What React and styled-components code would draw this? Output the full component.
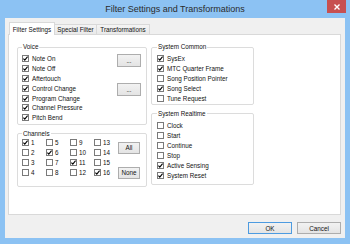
import React from 'react';
import styled, { createGlobalStyle } from 'styled-components';

const GlobalStyle = createGlobalStyle`
  * { box-sizing: border-box; }
  html, body { margin: 0; padding: 0; background: #8cc2f3; }
`;

const Window = styled.div`
  width: 350px;
  height: 244px;
  background: #8cc2f3;
  display: flex;
  flex-direction: column;
  font-family: 'Liberation Sans', Arial, sans-serif;
  color: #111;
`;

const TitleBar = styled.div`
  height: 18px;
  display: grid;
  grid-template-columns: 1fr auto 1fr;
  align-items: start;
`;

const Title = styled.div`
  grid-column: 2;
  font-size: 9px;
  line-height: 18px;
  color: #2b2b2b;
  white-space: nowrap;
`;

const CloseButton = styled.div`
  grid-column: 3;
  justify-self: end;
  width: 19px;
  height: 13px;
  margin-right: 4px;
  background: #c75050;
  display: flex;
  align-items: center;
  justify-content: center;
`;

const Body = styled.div`
  flex: 1;
  margin: 0 5px 6px;
  background: #f0f0f0;
  padding: 4px 4px 0 3px;
  display: flex;
  flex-direction: column;
`;

const TabStrip = styled.div`
  display: flex;
  align-items: flex-end;
  height: 13px;
  padding-left: 1px;
  margin-bottom: -1px;
  position: relative;
  z-index: 1;
`;

const Tab = styled.div`
  width: ${p => p.$w}px;
  height: ${p => (p.$active ? 13 : 11)}px;
  border: 1px solid #d9d9d9;
  border-left: ${p => (p.$first ? '1px solid #d9d9d9' : 'none')};
  border-bottom: ${p => (p.$active ? 'none' : '1px solid #d9d9d9')};
  background: ${p => (p.$active ? '#fff' : 'linear-gradient(#f4f4f4, #e9e9e9)')};
  font-size: 6.3px;
  display: flex;
  align-items: center;
  justify-content: center;
  white-space: nowrap;
`;

const Panel = styled.div`
  flex: 1;
  background: #fff;
  border: 1px solid #d9d9d9;
  padding: 8px 8px 0;
  display: flex;
  gap: 4px;
  align-items: flex-start;
`;

const Column = styled.div`
  width: ${p => p.$w}px;
  display: flex;
  flex-direction: column;
  gap: 5px;
`;

const GroupBox = styled.fieldset`
  margin: 0;
  min-width: 0;
  padding: ${p => p.$pad};
  border: 1px solid #dcdcdc;
  border-radius: 2px;
`;

const Legend = styled.legend`
  padding: 0 1px;
  font-size: 6.3px;
  line-height: 8px;
  color: #111;
`;

const Split = styled.div`
  display: flex;
  justify-content: space-between;
  align-items: flex-start;
`;

const List = styled.div`
  display: flex;
  flex-direction: column;
`;

const Row = styled.div`
  display: flex;
  align-items: center;
  gap: ${p => p.$gap || 3}px;
  height: ${p => p.$h || 10}px;
  font-size: 6.3px;
  white-space: nowrap;
`;

const Box = styled.span`
  width: 7px;
  height: 7px;
  flex: none;
  border: 1px solid #7a7a7a;
  background: #fff;
  display: flex;
  align-items: center;
  justify-content: center;
`;

const ChannelGrid = styled.div`
  display: grid;
  grid-auto-flow: column;
  grid-template-rows: repeat(4, 10px);
  grid-template-columns: repeat(4, 24px);
`;

const ButtonStack = styled.div`
  display: flex;
  flex-direction: column;
  gap: ${p => p.$gap}px;
  padding-top: ${p => p.$top || 0}px;
`;

const Button = styled.div`
  width: ${p => p.$w}px;
  height: ${p => p.$h}px;
  border: 1px solid ${p => (p.$default ? '#4d9be0' : '#adadad')};
  background: linear-gradient(#f2f2f2, #e4e4e4);
  font-size: 6.3px;
  display: flex;
  align-items: center;
  justify-content: center;
  color: #111;
`;

const Footer = styled.div`
  display: flex;
  justify-content: flex-end;
  gap: 5px;
  padding: 7px 0 4px;
`;

const Check = ({ checked, label, h, gap }) => (
  <Row $h={h} $gap={gap}>
    <Box>
      {checked && (
        <svg width="5" height="5" viewBox="0 0 5 5">
          <path d="M0.4 2.6 L1.8 4.1 L4.6 0.6" fill="none" stroke="#000" strokeWidth="1.1" />
        </svg>
      )}
    </Box>
    {label}
  </Row>
);

const voice = ['Note On', 'Note Off', 'Aftertouch', 'Control Change', 'Program Change', 'Channel Pressure', 'Pitch Bend'];
const common = [
  ['SysEx', true],
  ['MTC Quarter Frame', true],
  ['Song Position Pointer', false],
  ['Song Select', true],
  ['Tune Request', false],
];
const realtime = [
  ['Clock', false],
  ['Start', false],
  ['Continue', false],
  ['Stop', false],
  ['Active Sensing', true],
  ['System Reset', true],
];
const onChannels = [1, 6, 11, 16];

export default function App() {
  return (
    <>
      <GlobalStyle />
      <Window>
        <TitleBar>
          <Title>Filter Settings and Transformations</Title>
          <CloseButton>
            <svg width="6" height="6" viewBox="0 0 6 6">
              <path d="M0.5 0.5 L5.5 5.5 M5.5 0.5 L0.5 5.5" stroke="#fff" strokeWidth="1.4" />
            </svg>
          </CloseButton>
        </TitleBar>
        <Body>
          <TabStrip>
            <Tab $w={46} $active $first>Filter Settings</Tab>
            <Tab $w={42}>Special Filter</Tab>
            <Tab $w={53}>Transformations</Tab>
          </TabStrip>
          <Panel>
            <Column $w={130}>
              <GroupBox $pad="3px 5px 1px 4px">
                <Legend>Voice</Legend>
                <Split>
                  <List>
                    {voice.map(v => <Check key={v} checked label={v} h={9.8} />)}
                  </List>
                  <ButtonStack $gap={16}>
                    <Button $w={24} $h={13}>...</Button>
                    <Button $w={24} $h={13}>...</Button>
                  </ButtonStack>
                </Split>
              </GroupBox>
              <GroupBox $pad="0 6px 7px 4px">
                <Legend>Channels</Legend>
                <Split>
                  <ChannelGrid>
                    {Array.from({ length: 16 }, (_, i) => (
                      <Check key={i} checked={onChannels.includes(i + 1)} label={String(i + 1)} gap={2} />
                    ))}
                  </ChannelGrid>
                  <ButtonStack $gap={13} $top={4}>
                    <Button $w={22} $h={12}>All</Button>
                    <Button $w={22} $h={12}>None</Button>
                  </ButtonStack>
                </Split>
              </GroupBox>
            </Column>
            <Column $w={103}>
              <GroupBox $pad="3px 4px 1px 5px">
                <Legend>System Common</Legend>
                <List>
                  {common.map(([l, c]) => <Check key={l} checked={c} label={l} h={9.8} />)}
                </List>
              </GroupBox>
              <GroupBox $pad="3px 4px 3px 5px">
                <Legend>System Realtime</Legend>
                <List>
                  {realtime.map(([l, c]) => <Check key={l} checked={c} label={l} />)}
                </List>
              </GroupBox>
            </Column>
          </Panel>
          <Footer>
            <Button $w={44} $h={12} $default>OK</Button>
            <Button $w={44} $h={12}>Cancel</Button>
          </Footer>
        </Body>
      </Window>
    </>
  );
}
